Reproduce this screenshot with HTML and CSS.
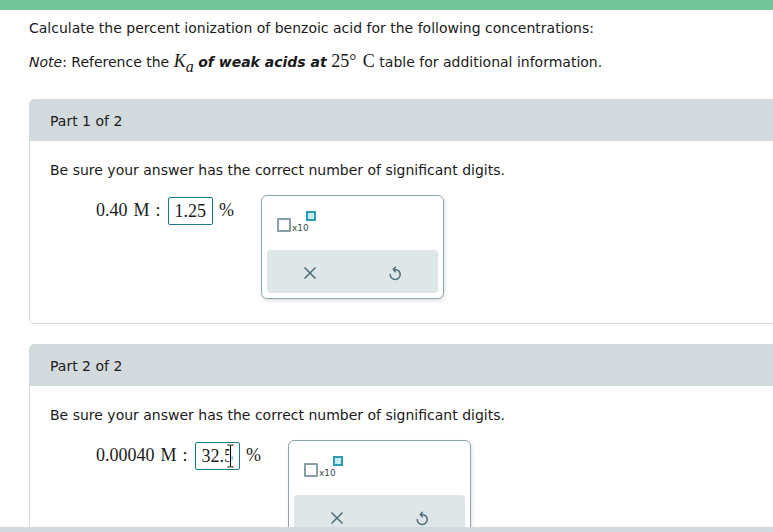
FILE: index.html
```html
<!DOCTYPE html>
<html>
<head>
<meta charset="utf-8">
<link rel="stylesheet" href="styles.css">
</head>
<body>
<div class="topbar"></div>
<div class="page">
  <p class="intro">Calculate the percent ionization of benzoic acid for the following concentrations:</p>
  <p class="note"><i>Note</i>: Reference the <span class="math"><i>K</i><sub><i>a</i></sub></span> <b><i>of weak acids at</i></b> <span class="math deg">25° C</span> table for additional information.</p>

  <section class="part">
    <div class="part-head">Part 1 of 2</div>
    <div class="part-body">
      <p class="hint">Be sure your answer has the correct number of significant digits.</p>
      <div class="answer-row">
        <span class="label">0.40 M :</span>
        <span class="input">1.25</span>
        <span class="unit">%</span>
        <div class="widget">
          <div class="widget-top">
            <span class="sci">
              <span class="sci-box"></span><span class="sci-x">x10</span><span class="sci-exp"></span>
            </span>
          </div>
          <div class="widget-btns">
            <svg class="ico" width="14" height="14" viewBox="0 0 14 14"><path d="M1.5 1.5 L12.5 12.5 M12.5 1.5 L1.5 12.5" stroke="#4d6b77" stroke-width="1.5" fill="none"/></svg>
            <svg class="ico" width="14" height="16" viewBox="0 0 14 16"><path d="M2.2 9.5 A5 5 0 1 0 7 4.5 L5.8 4.5" stroke="#4d6b77" stroke-width="1.5" fill="none" stroke-linecap="round"/><path d="M7.4 2.3 L5.3 4.5 L7.4 6.7" stroke="#4d6b77" stroke-width="1.5" fill="none" stroke-linecap="round" stroke-linejoin="round"/></svg>
          </div>
        </div>
      </div>
    </div>
  </section>

  <section class="part">
    <div class="part-head">Part 2 of 2</div>
    <div class="part-body">
      <p class="hint">Be sure your answer has the correct number of significant digits.</p>
      <div class="answer-row">
        <span class="label">0.00040 M :</span>
        <span class="input">32.5<svg class="ibeam" width="7" height="24" viewBox="0 0 7 24"><path d="M0.5 1 H2.5 Q3.5 1 3.5 2 V22 Q3.5 23 2.5 23 H0.5 M6.5 1 H4.5 Q3.5 1 3.5 2 M3.5 22 Q3.5 23 4.5 23 H6.5" stroke="#fff" stroke-width="2.6" fill="none"/><path d="M0.5 1 H2.5 Q3.5 1 3.5 2 V22 Q3.5 23 2.5 23 H0.5 M6.5 1 H4.5 Q3.5 1 3.5 2 M3.5 22 Q3.5 23 4.5 23 H6.5" stroke="#000" stroke-width="1" fill="none"/></svg></span>
        <span class="unit">%</span>
        <div class="widget">
          <div class="widget-top">
            <span class="sci">
              <span class="sci-box"></span><span class="sci-x">x10</span><span class="sci-exp"></span>
            </span>
          </div>
          <div class="widget-btns">
            <svg class="ico" width="14" height="14" viewBox="0 0 14 14"><path d="M1.5 1.5 L12.5 12.5 M12.5 1.5 L1.5 12.5" stroke="#4d6b77" stroke-width="1.5" fill="none"/></svg>
            <svg class="ico" width="14" height="16" viewBox="0 0 14 16"><path d="M2.2 9.5 A5 5 0 1 0 7 4.5 L5.8 4.5" stroke="#4d6b77" stroke-width="1.5" fill="none" stroke-linecap="round"/><path d="M7.4 2.3 L5.3 4.5 L7.4 6.7" stroke="#4d6b77" stroke-width="1.5" fill="none" stroke-linecap="round" stroke-linejoin="round"/></svg>
          </div>
        </div>
      </div>
    </div>
  </section>
</div>
<div class="bottombar"></div>
</body>
</html>
```
FILE: styles.css
```css
html, body {
  margin: 0;
  padding: 0;
  height: 532px;
  overflow: hidden;
  background: #fff;
}
body {
  font-family: "DejaVu Sans", Verdana, sans-serif;
  font-size: 14px;
  color: #1a1a1a;
  position: relative;
}
.topbar {
  height: 10px;
  background: #73c69a;
}
.page {
  padding-left: 29px;
  margin-right: -20px;
}
.intro {
  margin: 0;
  padding-top: 9px;
  line-height: 18px;
}
.note {
  margin: 15px 0 0;
  line-height: 18px;
}
.math {
  font-family: "Liberation Serif", "Times New Roman", serif;
  font-size: 18px;
}
.deg {
  word-spacing: 2px;
}
.math sub {
  font-size: 16px;
  vertical-align: -5px;
  line-height: 0;
}
.part {
  margin-top: 28px;
  border: 1px solid #d3dadd;
  border-radius: 5px;
  overflow: hidden;
}
.part + .part {
  margin-top: 20px;
}
.part-head {
  height: 41px;
  background: #d3dadd;
  padding-left: 20px;
  line-height: 43px;
}
.part-body {
  padding: 20px 20px 24px;
}
.hint {
  margin: 0;
  line-height: 18px;
}
.answer-row {
  display: flex;
  align-items: flex-start;
  margin-top: 16px;
  padding-left: 46px;
  font-family: "Liberation Serif", "Times New Roman", serif;
  font-size: 18px;
}
.label {
  margin-top: 5px;
  word-spacing: 1.5px;
}
.input {
  position: relative;
  margin: 2px 0 0 7px;
  height: 26px;
  line-height: 27px;
  padding: 0 6px;
  border: 1px solid #1a7a8c;
  border-radius: 2px;
}
.ibeam {
  position: absolute;
  right: 5px;
  top: 1px;
}
.unit {
  margin: 5px 0 0 6px;
}
.widget {
  margin-left: 27px;
  width: 171px;
  height: 97px;
  border: 1px solid #8fa5ad;
  border-radius: 6px;
  box-shadow: 1px 2px 4px rgba(0, 0, 0, 0.12);
  background: #fff;
  display: flex;
  flex-direction: column;
  padding: 0 5px 5px;
}
.widget-top {
  height: 54px;
  padding: 15px 0 0 10px;
  box-sizing: border-box;
}
.sci {
  display: inline-flex;
  align-items: flex-start;
  height: 24px;
}
.sci-box {
  margin-top: 7px;
  width: 10px;
  height: 10px;
  border: 2px solid #8a9ea6;
  border-radius: 1px;
}
.sci-x {
  font-family: "DejaVu Sans", sans-serif;
  font-size: 9px;
  margin: 12px 0 0 1px;
  color: #3a4a50;
}
.sci-exp {
  margin-left: -3px;
  width: 6px;
  height: 6px;
  border: 2px solid #2e9db4;
  background: #c5edf1;
}
.widget-btns {
  flex: 1;
  background: #dfe6e8;
  border-radius: 4px;
  display: flex;
  justify-content: space-around;
  align-items: center;
}
.ico {
  margin-top: 2px;
}
.bottombar {
  position: absolute;
  left: 0;
  right: 0;
  bottom: 0;
  height: 5px;
  background: #d3dadd;
}
```
